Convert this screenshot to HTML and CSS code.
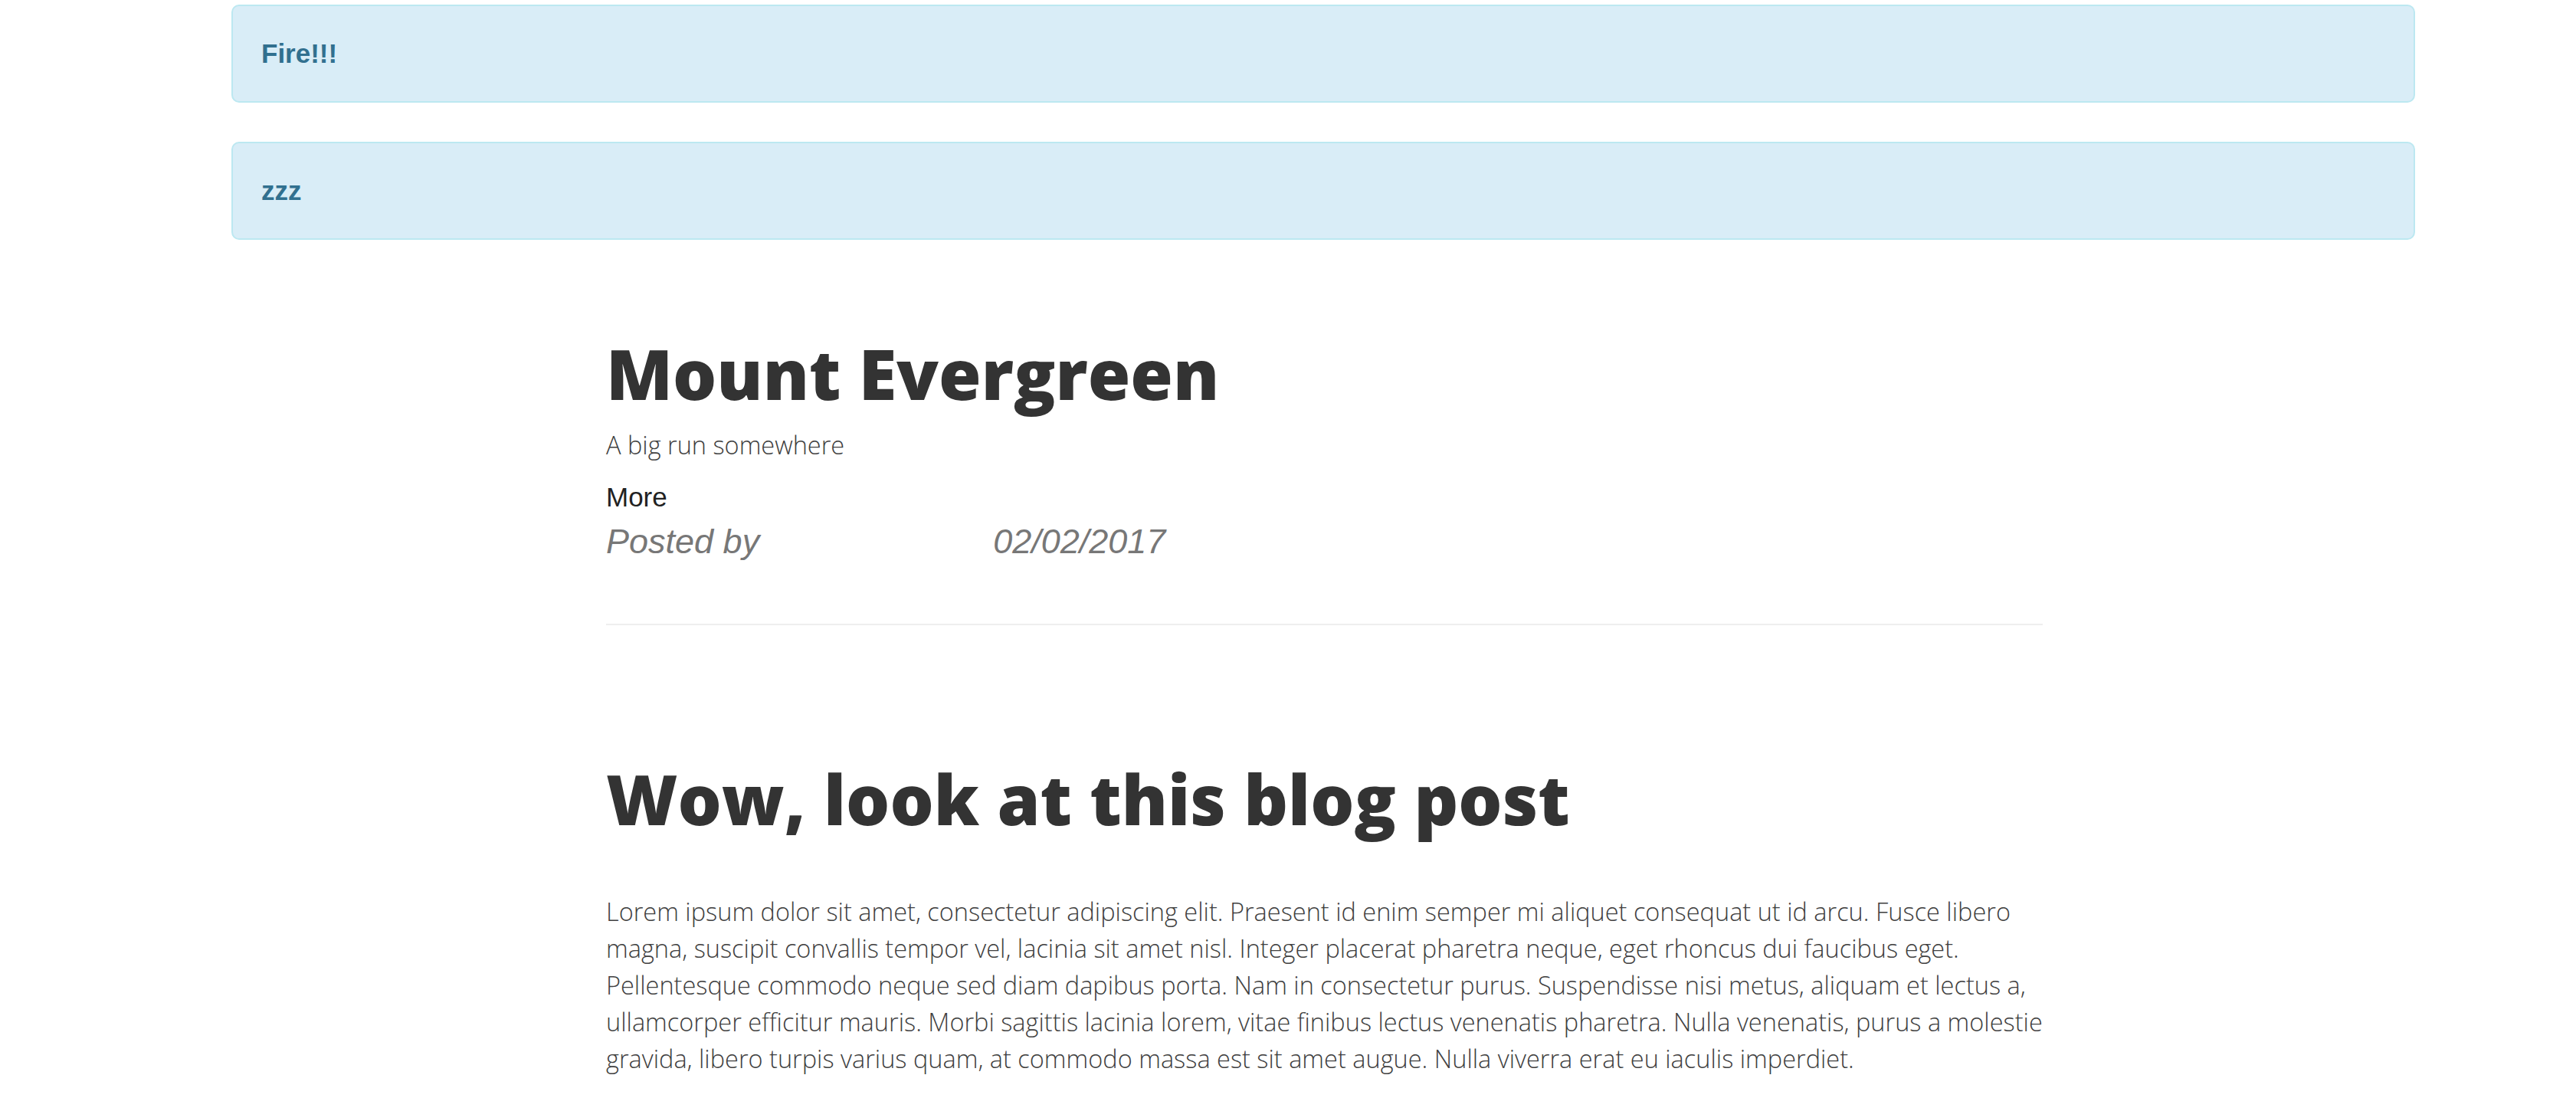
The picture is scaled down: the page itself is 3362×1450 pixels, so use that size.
FILE: index.html
```html
<!DOCTYPE html>
<html lang="en">
<head>
<meta charset="utf-8">
<title>Mount Evergreen</title>
<link rel="stylesheet" href="styles.css">
</head>
<body>
<div class="page">
  <div class="alerts">
    <div class="alert">Fire!!!</div>
    <div class="alert">zzz</div>
  </div>
  <div class="post-column">
    <div class="post-preview">
      <h2 class="post-title">Mount Evergreen</h2>
      <h3 class="post-subtitle">A big run somewhere</h3>
      <div class="post-more">More</div>
      <p class="post-meta"><span class="meta-label">Posted by</span><span class="meta-date">02/02/2017</span></p>
    </div>
    <hr class="divider">
    <article class="post-body">
      <h1 class="post-heading">Wow, look at this blog post</h1>
      <p class="post-text">Lorem ipsum dolor sit amet, consectetur adipiscing elit. Praesent id enim semper mi aliquet consequat ut id arcu. Fusce libero magna, suscipit convallis tempor vel, lacinia sit amet nisl. Integer placerat pharetra neque, eget rhoncus dui faucibus eget. Pellentesque commodo neque sed diam dapibus porta. Nam in consectetur purus. Suspendisse nisi metus, aliquam et lectus a, ullamcorper efficitur mauris. Morbi sagittis lacinia lorem, vitae finibus lectus venenatis pharetra. Nulla venenatis, purus a molestie gravida, libero turpis varius quam, at commodo massa est sit amet augue. Nulla viverra erat eu iaculis imperdiet.</p>
    </article>
  </div>
</div>
</body>
</html>
```

FILE: styles.css
```css
html, body {
  margin: 0;
  padding: 0;
  background: #ffffff;
}

body {
  font-family: "Liberation Sans", Arial, sans-serif;
  color: #333333;
}

.page {
  width: 2850px;
  margin-left: 302px;
  padding-top: 6px;
}

.alerts {
  display: flex;
  flex-direction: column;
  gap: 51px;
}

.alert {
  background: #d9edf7;
  border: 2px solid #bce8f1;
  border-radius: 10px;
  color: #31708f;
  font-family: "Liberation Sans", Arial, sans-serif;
  font-weight: bold;
  font-size: 35px;
  line-height: 50px;
  padding: 37px 37px;
}

.post-column {
  width: 1875px;
  margin-left: 489px;
  padding-top: 125px;
}

.post-title {
  margin: 0;
  font-family: "Open Sans", sans-serif;
  font-weight: 800;
  font-size: 90px;
  line-height: 99px;
  color: #333333;
}

.post-subtitle {
  margin: 21px 0 0;
  font-family: "Open Sans", sans-serif;
  font-weight: 300;
  font-size: 32.5px;
  line-height: 46px;
  color: #404040;
}

.post-more {
  margin-top: 22px;
  font-size: 35px;
  line-height: 46px;
  color: #222222;
}

.post-meta {
  margin: 10px 0 0;
  font-size: 45px;
  line-height: 50px;
  font-style: italic;
  color: #777777;
  display: flex;
}

.meta-date {
  margin-left: 305px;
}

.divider {
  margin: 82px 0 0;
  border: 0;
  border-top: 2px solid #eeeeee;
  height: 0;
}

.post-heading {
  margin: 177px 0 0;
  font-family: "Open Sans", sans-serif;
  font-weight: 800;
  font-size: 90px;
  line-height: 99px;
  color: #333333;
}

.post-text {
  margin: 74px 0 0;
  font-family: "Open Sans", sans-serif;
  font-weight: 300;
  font-size: 32.5px;
  line-height: 48px;
  color: #404040;
}
```
